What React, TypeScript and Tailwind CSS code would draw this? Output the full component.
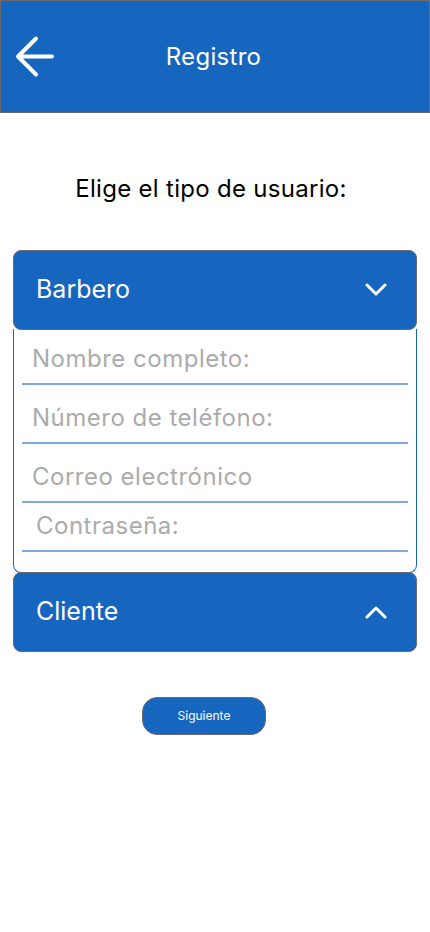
import { useState } from 'react'

const fields = [
    { label: 'Nombre completo:', type: 'text', h: 'h-[56px]', pl: 'pl-[10px]' },
    { label: 'Número de teléfono:', type: 'tel', h: 'h-[59px]', pl: 'pl-[10px]' },
    { label: 'Correo electrónico', type: 'email', h: 'h-[59px]', pl: 'pl-[10px]' },
    { label: 'Contraseña:', type: 'password', h: 'h-[49px]', pl: 'pl-[14px]' },
]

const Chevron = ({ up }: { up?: boolean }) => (
    <svg width="22" height="14" viewBox="0 0 22 14" fill="none" className="shrink-0">
        <path
            d={up ? 'M2 12 L11 3 L20 12' : 'M2 2 L11 11 L20 2'}
            stroke="white"
            strokeWidth="3"
            strokeLinecap="round"
            strokeLinejoin="round"
        />
    </svg>
)

export default function App() {
    const [open, setOpen] = useState<'barbero' | 'cliente'>('barbero')

    return (
        <div className="min-h-[932px] w-[430px] bg-white font-['Inter',sans-serif]">
            {/* Header */}
            <header className="flex h-[113px] items-center border border-[#6b6b6b] bg-[#1666c0] px-[13px]">
                <button aria-label="Volver" className="w-[44px] shrink-0">
                    <svg width="44" height="44" viewBox="0 0 44 44" fill="none">
                        <path
                            d="M38 21.5 H4 M22 3.5 L4 21.5 L22 39.5"
                            stroke="white"
                            strokeWidth="4"
                            strokeLinecap="round"
                            strokeLinejoin="round"
                        />
                    </svg>
                </button>
                <h1 className="flex-1 pr-[3px] text-center text-[24px] tracking-[0.3px] text-white">Registro</h1>
                <div className="w-[44px] shrink-0" />
            </header>

            <p className="mt-[58px] pr-[8px] text-center text-[24px] tracking-[0.3px] text-black">
                Elige el tipo de usuario:
            </p>

            <div className="mx-[13px] mt-[43px]">
                {/* Barbero */}
                <button
                    onClick={() => setOpen('barbero')}
                    className="flex h-[80px] w-full items-center justify-between rounded-[8px] border border-[#6b6b6b] bg-[#1666c0] pl-[22px] pr-[29px]"
                >
                    <span className="text-[25px] text-white">Barbero</span>
                    <Chevron />
                </button>

                {open === 'barbero' && (
                    <div className="-mt-px rounded-b-[8px] border border-t-0 border-[#1666c0] px-[8px] pb-[20px]">
                        {fields.map((f) => (
                            <div
                                key={f.label}
                                className={`flex items-end border-b-2 border-[#7ea8de] pb-[10px] ${f.h} ${f.pl}`}
                            >
                                <input
                                    type={f.type}
                                    placeholder={f.label}
                                    className="h-[29px] w-full bg-transparent text-[24px] leading-[29px] tracking-[0.5px] text-[#333] outline-none placeholder:text-[#ababab]"
                                />
                            </div>
                        ))}
                    </div>
                )}

                {/* Cliente */}
                <button
                    onClick={() => setOpen(open === 'cliente' ? 'barbero' : 'cliente')}
                    className="-mt-px flex h-[80px] w-full items-center justify-between rounded-[8px] border border-[#6b6b6b] bg-[#1666c0] pl-[22px] pr-[29px]"
                >
                    <span className="text-[25px] text-white">Cliente</span>
                    <Chevron up />
                </button>
            </div>

            <div className="ml-[142px] mt-[45px]">
                <button className="h-[38px] w-[124px] rounded-[15px] border border-[#6b6b6b] bg-[#1666c0] text-[12px] text-white">
                    Siguiente
                </button>
            </div>
        </div>
    )
}
